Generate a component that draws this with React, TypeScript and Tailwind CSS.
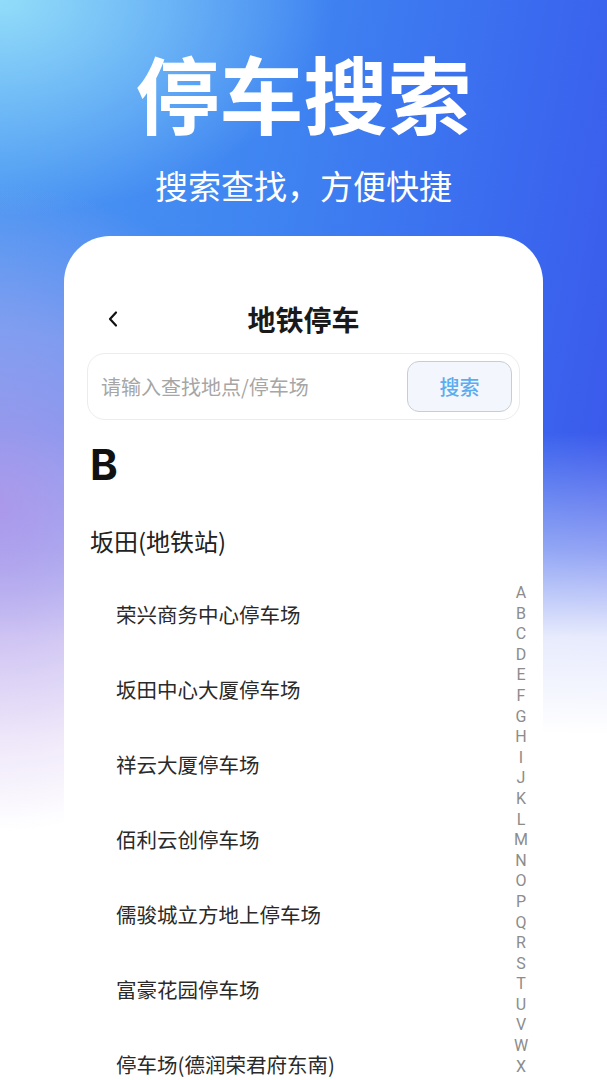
import React from "react";

const LOTS = [
  "荣兴商务中心停车场",
  "坂田中心大厦停车场",
  "祥云大厦停车场",
  "佰利云创停车场",
  "儒骏城立方地上停车场",
  "富豪花园停车场",
  "停车场(德润荣君府东南)",
];

const LETTERS = "ABCDEFGHIJKLMNOPQRSTUVWX".split("");

const CJK = "font-['Noto_Sans_CJK_SC','Noto_Sans',sans-serif]";

export default function App() {
  return (
    <div
      className={`flex h-[1080px] w-[607px] flex-col items-center overflow-hidden ${CJK} bg-[image:radial-gradient(ellipse_50%_30%_at_0%_47%,rgba(176,150,234,0.9)_0%,rgba(196,170,236,0.45)_55%,rgba(196,170,236,0)_100%),linear-gradient(180deg,rgba(255,255,255,0)_40%,rgba(255,255,255,0.45)_51%,rgba(255,255,255,0.88)_59%,#ffffff_68%),radial-gradient(ellipse_55%_20%_at_0%_0%,rgba(150,224,250,0.95)_0%,rgba(150,224,250,0)_100%),linear-gradient(100deg,#4c98f3_0%,#3f84f1_38%,#3a6aef_68%,#3c4ee9_100%)]`}
    >
      <h1 className="mt-[50px] text-[84px] font-bold leading-[84px] text-white">停车搜索</h1>
      <p className="mt-[31px] text-[33px] leading-[40px] text-white">搜索查找，方便快捷</p>

      <div className="mt-[31px] flex w-[479px] flex-1 flex-col rounded-t-[46px] bg-white">
        <div className="px-[23px] pt-[58px]">
          <div className="grid h-[50px] grid-cols-[1fr_auto_1fr] items-center">
            <svg width="12" height="18" viewBox="0 0 12 18" className="ml-[20px]">
              <path d="M9 2.5L3 9l6 6.5" fill="none" stroke="#111" strokeWidth="2.2" strokeLinecap="round" strokeLinejoin="round" />
            </svg>
            <span className="text-[28px] font-bold leading-[50px] text-[#1a1a1a]">地铁停车</span>
            <span />
          </div>

          <div className="mt-[9px] flex h-[67px] items-center justify-between rounded-[18px] border border-[#ececec] pl-[13px] pr-[7px]">
            <span className="text-[20px] leading-[28px] text-[#a6a6a6]">请输入查找地点/停车场</span>
            <button className="flex h-[51px] w-[105px] items-center justify-center rounded-[12px] border border-[#c8cdd5] bg-[#f3f7fd] text-[20px] font-medium text-[#5badf0]">
              搜索
            </button>
          </div>
        </div>

        <div className="flex">
          <div className="flex-1 pl-[26px]">
            <div className="mt-[24px] font-['Inter',sans-serif] text-[42px] font-bold leading-[42px] text-[#111]">B</div>
            <div className="mt-[39px] text-[24px] leading-[32px] text-[#222]">坂田(地铁站)</div>
            <ul className="mt-[20px] pl-[26px]">
              {LOTS.map((name) => (
                <li key={name} className="flex h-[75px] items-center text-[20.5px] text-[#2a2a2a]">
                  {name}
                </li>
              ))}
            </ul>
          </div>
          <div className="mr-[10px] mt-[163px] flex w-[24px] flex-col items-center">
            {LETTERS.map((l) => (
              <span key={l} className="font-['Roboto',sans-serif] text-[16px] leading-[20.6px] text-[#8c8c8c]">
                {l}
              </span>
            ))}
          </div>
        </div>
      </div>
    </div>
  );
}
